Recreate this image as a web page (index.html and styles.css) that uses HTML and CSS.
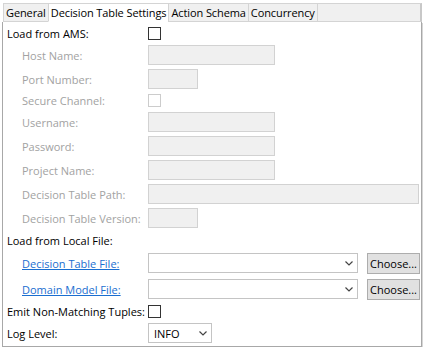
FILE: index.html
```html
<!DOCTYPE html>
<html>
<head>
<meta charset="utf-8">
<link rel="stylesheet" href="styles.css">
</head>
<body>
<div class="window">
  <div class="tabs">
    <div class="tab">General</div>
    <div class="tab active">Decision Table Settings</div>
    <div class="tab">Action Schema</div>
    <div class="tab">Concurrency</div>
    <div class="tab-fill"></div>
  </div>
  <div class="panel">
    <div class="row r-check">
      <span class="label">Load from AMS:</span>
      <span class="check"></span>
    </div>
    <div class="row r-input">
      <span class="label sub dis">Host Name:</span>
      <span class="field w-mid"></span>
    </div>
    <div class="row r-input">
      <span class="label sub dis">Port Number:</span>
      <span class="field w-small"></span>
    </div>
    <div class="row r-check">
      <span class="label sub dis">Secure Channel:</span>
      <span class="check dis-check"></span>
    </div>
    <div class="row r-input">
      <span class="label sub dis">Username:</span>
      <span class="field w-mid"></span>
    </div>
    <div class="row r-input">
      <span class="label sub dis">Password:</span>
      <span class="field w-mid"></span>
    </div>
    <div class="row r-input">
      <span class="label sub dis">Project Name:</span>
      <span class="field w-mid"></span>
    </div>
    <div class="row r-input">
      <span class="label sub dis">Decision Table Path:</span>
      <span class="field w-full"></span>
    </div>
    <div class="row r-input">
      <span class="label sub dis">Decision Table Version:</span>
      <span class="field w-small"></span>
    </div>
    <div class="row r-label">
      <span class="label">Load from Local File:</span>
    </div>
    <div class="row r-combo">
      <span class="label sub"><a class="link" href="#">Decision Table File: </a></span>
      <span class="combo-group">
        <span class="combo">
          <svg class="chev" width="8" height="5" viewBox="0 0 8 5"><path d="M0.5 0.5 L4 4 L7.5 0.5" fill="none" stroke="#444" stroke-width="1.2"/></svg>
        </span>
        <span class="btn">Choose...</span>
      </span>
    </div>
    <div class="row r-combo">
      <span class="label sub"><a class="link" href="#">Domain Model File: </a></span>
      <span class="combo-group">
        <span class="combo">
          <svg class="chev" width="8" height="5" viewBox="0 0 8 5"><path d="M0.5 0.5 L4 4 L7.5 0.5" fill="none" stroke="#444" stroke-width="1.2"/></svg>
        </span>
        <span class="btn">Choose...</span>
      </span>
    </div>
    <div class="row r-check">
      <span class="label">Emit Non-Matching Tuples:</span>
      <span class="check"></span>
    </div>
    <div class="row r-input">
      <span class="label">Log Level:</span>
      <span class="select">
        <span class="sel-text">INFO</span>
        <svg class="chev" width="8" height="5" viewBox="0 0 8 5"><path d="M0.5 0.5 L4 4 L7.5 0.5" fill="none" stroke="#444" stroke-width="1.2"/></svg>
      </span>
    </div>
  </div>
</div>
</body>
</html>
```

FILE: styles.css
```css
html, body {
  margin: 0;
  padding: 0;
  background: #ffffff;
}

body {
  font-family: "Open Sans", "Noto Sans", sans-serif;
  font-size: 11px;
  color: #000000;
}

.window {
  margin: 3px 0 0 2px;
  width: 420px;
}

.tabs {
  display: flex;
  height: 19px;
  box-sizing: border-box;
}

.tab {
  box-sizing: border-box;
  height: 19px;
  padding: 0 2px;
  line-height: 17px;
  letter-spacing: -0.1px;
  background: #f0f0f0;
  border: 1px solid #d4d4d4;
  border-right: none;
  white-space: nowrap;
}

.tab:first-child {
  margin-left: 1px;
}

.tab.active {
  background: #ffffff;
  border-bottom-color: #ffffff;
}

.tab-fill {
  flex: 1;
  background: #f0f0f0;
  border: 1px solid #d4d4d4;
  border-right: 2px solid #c8c8c8;
}

.panel {
  box-sizing: border-box;
  border-left: 1px solid #a8a8a8;
  border-right: 1px solid #a8a8a8;
  border-bottom: 1px solid #a8a8a8;
  box-shadow: 1px 1px 0 #d6d6d6;
  padding: 4px 0 3px 4px;
  display: flex;
  flex-direction: column;
  gap: 4px;
}

.row {
  display: grid;
  grid-template-columns: 141px 1fr;
  align-items: center;
}

.r-check { height: 15px; }
.r-input { height: 20px; }
.r-label { height: 16px; }
.r-combo { height: 22px; }

.label {
  white-space: nowrap;
  line-height: 15px;
}

.label.sub {
  padding-left: 15px;
}

.label.dis {
  color: #a2a2a2;
}

.link {
  color: #1a6ed0;
  text-decoration: underline;
}

.check {
  display: block;
  width: 13px;
  height: 13px;
  box-sizing: border-box;
  border: 1px solid #333333;
  background: #ffffff;
}

.check.dis-check {
  border-color: #cccccc;
}

.field {
  display: block;
  height: 20px;
  box-sizing: border-box;
  background: #f0f0f0;
  border: 1px solid #d2d2d2;
}

.w-small { width: 50px; }
.w-mid { width: 127px; }
.w-full { width: 271px; }

.combo-group {
  display: flex;
  align-items: center;
  gap: 9px;
}

.combo {
  box-sizing: border-box;
  width: 210px;
  height: 20px;
  border: 1px solid #c4c4c4;
  background: #ffffff;
  display: flex;
  align-items: center;
  justify-content: flex-end;
  padding-right: 4px;
}

.btn {
  box-sizing: border-box;
  width: 53px;
  height: 21px;
  background: #e1e1e1;
  border: 1px solid #adadad;
  line-height: 19px;
  text-align: center;
  white-space: nowrap;
}

.select {
  box-sizing: border-box;
  width: 64px;
  height: 20px;
  border: 1px solid #c4c4c4;
  background: #ffffff;
  display: flex;
  align-items: center;
  justify-content: space-between;
  padding: 0 4px 0 5px;
}

.chev {
  display: block;
}
```
